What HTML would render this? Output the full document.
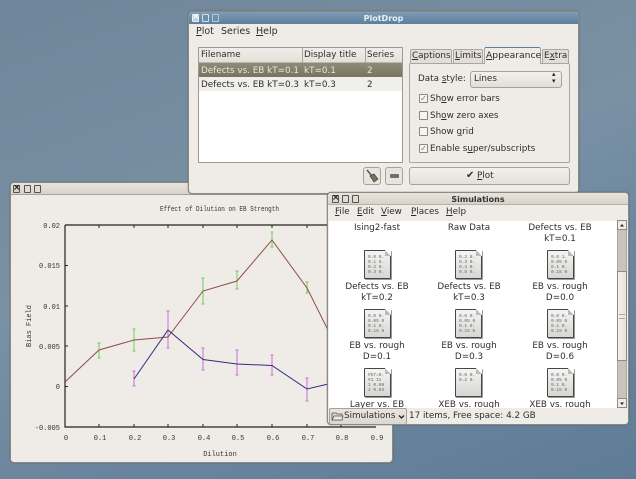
<!DOCTYPE html>
<html><head><meta charset="utf-8">
<style>
html,body{margin:0;padding:0;}
body{width:636px;height:479px;overflow:hidden;position:relative;background:linear-gradient(160deg,#6f8599 0%,#7a91a4 45%,#6b859e 70%,#5f7c96 100%);font-family:"DejaVu Sans","Liberation Sans",sans-serif;font-size:8.800px;color:#2e2e2e;}
.a,.a *{position:absolute;box-sizing:border-box;}
.a u,.a br{position:static;}
.t{white-space:nowrap;line-height:11px;}
.w{background:#efebe6;border:1px solid #8d8a84;border-radius:4px;box-shadow:0 0 1px #444;overflow:hidden;}
.btn{width:7px;height:8px;border:1px solid #55534f;border-radius:1px;background:#e0dbd3;}
.c{text-align:center;width:90px;line-height:11px;}
.ic{width:27px;height:29px;background:linear-gradient(#f4f4f2,#d6d6d2);border:1px solid #444449;border-radius:1px;box-shadow:1px 1px 0 #999;font:4.500px/5px "Liberation Mono",monospace;color:#666;padding:4px 0 0 3px;white-space:pre;}
.ic:after{content:"";position:absolute;right:-1px;top:-1px;width:6px;height:6px;background:linear-gradient(45deg,#bbb 50%,#fff 50%);}
.cb{width:9px;height:9px;border:1px solid #8b8880;background:#f6f4f0;border-radius:1px;color:#777;font-size:8px;line-height:7px;text-align:center;}
u{text-decoration:underline;}
</style></head><body>

<div class="a" style="left:0;top:0;width:636px;height:479px;filter:blur(.3px);">

<!-- Plot window -->
<div class="w" style="left:10px;top:182px;width:383px;height:281px;">
 <div style="left:0;top:0;width:381px;height:12px;background:linear-gradient(#e8e3dc,#d8d3ca);border-bottom:1px solid #a5a29b;"></div>
 <div class="btn" style="left:2px;top:2px;background:#d5d0c8;"></div>
 <div class="t" style="left:2px;top:0;font-size:9px;font-weight:bold;color:#222;width:7px;text-align:center;">×</div>
 <div class="btn" style="left:13px;top:2px;"></div>
 <div class="btn" style="left:23px;top:2px;"></div>
</div>
<svg style="left:0;top:0;" width="636" height="479" viewBox="0 0 636 479">
 <g font-family="Liberation Mono,monospace" font-size="7" fill="#333">
  <text x="160" y="211" textLength="119" lengthAdjust="spacingAndGlyphs">Effect of Dilution on EB Strength</text>
  <text x="60" y="228" text-anchor="end">0.02</text>
  <text x="60" y="268" text-anchor="end">0.015</text>
  <text x="60" y="309" text-anchor="end">0.01</text>
  <text x="60" y="349" text-anchor="end">0.005</text>
  <text x="60" y="389" text-anchor="end">0</text>
  <text x="60" y="430" text-anchor="end">-0.005</text>
  <text x="66" y="440" text-anchor="middle">0</text>
  <text x="100" y="440" text-anchor="middle">0.1</text>
  <text x="135" y="440" text-anchor="middle">0.2</text>
  <text x="169" y="440" text-anchor="middle">0.3</text>
  <text x="204" y="440" text-anchor="middle">0.4</text>
  <text x="238" y="440" text-anchor="middle">0.5</text>
  <text x="273" y="440" text-anchor="middle">0.6</text>
  <text x="308" y="440" text-anchor="middle">0.7</text>
  <text x="342" y="440" text-anchor="middle">0.8</text>
  <text x="377" y="440" text-anchor="middle">0.9</text>
  <text x="220" y="456" text-anchor="middle">Dilution</text>
  <text transform="translate(31,326) rotate(-90)" text-anchor="middle">Bias Field</text>
 </g>
 <path d="M65 225H376M65 225V427H376" fill="none" stroke="#222" stroke-width="1.200"/>
 <path d="M99 225v3M134 225v3M168 225v3M203 225v3M237 225v3M272 225v3M307 225v3M341 225v3M99 427v-3M134 427v-3M168 427v-3M203 427v-3M237 427v-3M272 427v-3M307 427v-3M341 427v-3M65 265.500h3M65 306h3M65 346h3M65 386.500h3" stroke="#222" stroke-width="1"/>
 <!-- error bars -->
 <g stroke="#6fce64" stroke-width="1" fill="none">
  <path d="M99 343v15M134 329v22M203 278v26M237 271v18M272 232v15M307 282v11"/>
  <path d="M97.500 343h3M97.500 358h3M132.500 329h3M132.500 351h3M201.500 278h3M201.500 304h3M235.500 271h3M235.500 289h3M270.500 232h3M270.500 247h3M305.500 282h3M305.500 293h3"/>
 </g>
 <g stroke="#c96fd6" stroke-width="1" fill="none">
  <path d="M134 371v15M168 311v37M203 348v22M237 350v25M272 355v20M307 378v23"/>
  <path d="M132.500 371h3M132.500 386h3M166.500 311h3M166.500 348h3M201.500 348h3M201.500 370h3M235.500 350h3M235.500 375h3M270.500 355h3M270.500 375h3M305.500 378h3M305.500 401h3"/>
 </g>
 <path d="M65 382L99 350L134 340L168 337L203 291L237 281L272 240L307 288L341 356" fill="none" stroke="#8f4f4a" stroke-width="1"/>
 <path d="M134 379L168 330L203 359.500L237 364L272 365.500L307 389L341 381" fill="none" stroke="#2e2e80" stroke-width="1"/>
</svg>

<!-- PlotDrop window -->
<div class="w" style="left:188px;top:11px;width:391px;height:183px;">
 <div style="left:0;top:0;width:389px;height:12px;background:linear-gradient(#7d9bb5,#5d7f9e);"></div>
 <div class="btn" style="left:3px;top:2px;background:#bcd0e0;border-color:#e8eef3;"></div>
 <div class="t" style="left:3px;top:0;font-size:9px;font-weight:bold;color:#fff;width:7px;text-align:center;">×</div>
 <div class="btn" style="left:13px;top:2px;background:#6f8ea9;border-color:#d5e0ea;"></div>
 <div class="btn" style="left:23px;top:2px;background:#6f8ea9;border-color:#b5c8d8;"></div>
 <div class="t" style="left:0;top:1px;width:389px;text-align:center;font-size:8px;font-weight:bold;color:#e8eef4;">PlotDrop</div>
 <div style="left:0;top:12px;width:389px;height:16px;background:#efebe6;"></div>
 <div class="t" style="left:7px;top:14px;font-size:9.500px;"><u>P</u>lot</div>
 <div class="t" style="left:32px;top:14px;font-size:9.500px;">Series</div>
 <div class="t" style="left:67px;top:14px;font-size:9.500px;"><u>H</u>elp</div>

 <div style="left:9px;top:35px;width:205px;height:116px;background:#fff;border:1px solid #9d9a93;">
  <div style="left:0;top:0;width:203px;height:15px;background:linear-gradient(#f0ece7,#e4e0d9);border-bottom:1px solid #bbb7af;"></div>
  <div style="left:103px;top:0;width:1px;height:15px;background:#a8a49c;"></div>
  <div style="left:166px;top:0;width:1px;height:15px;background:#a8a49c;"></div>
  <div class="t" style="left:2px;top:2px;">Filename</div>
  <div class="t" style="left:105px;top:2px;">Display title</div>
  <div class="t" style="left:168px;top:2px;">Series</div>
  <div style="left:0;top:15px;width:203px;height:14px;background:linear-gradient(#8f8b78,#78745f);"></div>
  <div style="left:0;top:29px;width:203px;height:14px;background:#f1efec;"></div>
  <div class="t" style="left:2px;top:18px;color:#e9e6da;">Defects vs. EB kT=0.1</div>
  <div class="t" style="left:105px;top:18px;color:#e9e6da;">kT=0.1</div>
  <div class="t" style="left:168px;top:18px;color:#e9e6da;">2</div>
  <div class="t" style="left:2px;top:32px;">Defects vs. EB kT=0.3</div>
  <div class="t" style="left:105px;top:32px;">kT=0.3</div>
  <div class="t" style="left:168px;top:32px;">2</div>
 </div>

 <!-- small buttons -->
 <div style="left:174px;top:155px;width:18px;height:18px;border:1px solid #a5a29b;border-radius:3px;background:#e9e5de;"></div>
 <div style="left:196px;top:155px;width:18px;height:18px;border:1px solid #a5a29b;border-radius:3px;background:#e9e5de;"></div>
 <svg style="left:176px;top:157px;" width="14" height="14" viewBox="0 0 14 14"><path d="M2 1L7 7" stroke="#555" stroke-width="1.500"/><path d="M5 7L9 5L13 10L9 13Z" fill="#77735f" stroke="#444" stroke-width=".7"/></svg>
 <div style="left:201px;top:162px;width:9px;height:4px;background:#6f6d68;border-radius:1px;"></div>

 <!-- tabs pane -->
 <div style="left:220px;top:51px;width:161px;height:100px;border:1px solid #a9a69f;border-radius:2px;background:#efebe6;"></div>
 <div style="left:221px;top:37px;width:42px;height:15px;background:#e2ded7;border:1px solid #a9a69f;border-radius:2px 2px 0 0;"></div>
 <div style="left:264px;top:37px;width:30px;height:15px;background:#e2ded7;border:1px solid #a9a69f;border-radius:2px 2px 0 0;"></div>
 <div style="left:295px;top:35px;width:57px;height:17px;background:#efebe6;border:1px solid #a9a69f;border-top:1px solid #5d7f9e;border-bottom:0;border-radius:2px 2px 0 0;"></div>
 <div style="left:353px;top:37px;width:27px;height:15px;background:#e2ded7;border:1px solid #a9a69f;border-radius:2px 2px 0 0;"></div>
 <div class="t" style="left:223px;top:39px;"><u>C</u>aptions</div>
 <div class="t" style="left:266px;top:39px;"><u>L</u>imits</div>
 <div class="t" style="left:297px;top:38px;font-size:9.200px;"><u>A</u>ppearance</div>
 <div class="t" style="left:355px;top:39px;">E<u>x</u>tra</div>

 <div class="t" style="left:229px;top:62px;">Data <u>s</u>tyle:</div>
 <div style="left:281px;top:59px;width:92px;height:17px;border:1px solid #a5a29b;border-radius:3px;background:linear-gradient(#f3f0eb,#e2ded6);"></div>
 <div class="t" style="left:285px;top:62px;">Lines</div>
 <div class="t" style="left:363px;top:59px;font-size:7px;line-height:7px;color:#222;">▴</div>
 <div class="t" style="left:363px;top:66px;font-size:7px;line-height:7px;color:#222;">▾</div>

 <div class="cb" style="left:230px;top:82px;">✓</div>
 <div class="t" style="left:241px;top:82px;">Sh<u>o</u>w error bars</div>
 <div class="cb" style="left:230px;top:99px;"></div>
 <div class="t" style="left:241px;top:99px;">Sh<u>o</u>w zero axes</div>
 <div class="cb" style="left:230px;top:115px;"></div>
 <div class="t" style="left:241px;top:115px;">Show <u>g</u>rid</div>
 <div class="cb" style="left:230px;top:132px;">✓</div>
 <div class="t" style="left:241px;top:132px;">Enable s<u>u</u>per/subscripts</div>

 <div style="left:220px;top:155px;width:161px;height:18px;border:1px solid #a5a29b;border-radius:3px;background:linear-gradient(#f3f0eb,#e4e0d9);"></div>
 <div class="t" style="left:277px;top:158px;font-size:10px;color:#333;">✔</div>
 <div class="t" style="left:288px;top:159px;"><u>P</u>lot</div>
</div>

<!-- Simulations window -->
<div class="w" style="left:327px;top:192px;width:302px;height:233px;">
 <div style="left:0;top:0;width:300px;height:12px;background:linear-gradient(#e8e3dc,#d8d3ca);border-bottom:1px solid #b5b2aa;"></div>
 <div class="btn" style="left:4px;top:2px;"></div>
 <div class="t" style="left:4px;top:0;font-size:9px;font-weight:bold;color:#222;width:7px;text-align:center;">×</div>
 <div class="btn" style="left:14px;top:2px;"></div>
 <div class="btn" style="left:24px;top:2px;"></div>
 <div class="t" style="left:0;top:1px;width:300px;text-align:center;font-size:8px;font-weight:bold;color:#333;">Simulations</div>
 <div class="t" style="left:7px;top:14px;"><u>F</u>ile</div>
 <div class="t" style="left:29px;top:14px;"><u>E</u>dit</div>
 <div class="t" style="left:53px;top:14px;"><u>V</u>iew</div>
 <div class="t" style="left:83px;top:14px;"><u>P</u>laces</div>
 <div class="t" style="left:118px;top:14px;"><u>H</u>elp</div>

 <div style="left:1px;top:28px;width:288px;height:187px;background:#fff;overflow:hidden;">
  <div class="t c" style="left:3px;top:2px;">Ising2-fast</div>
  <div class="t c" style="left:95px;top:2px;">Raw Data</div>
  <div class="t c" style="left:186px;top:2px;">Defects vs. EB<br>kT=0.1</div>

  <div class="ic" style="left:35px;top:29px;">0.0 0.
0.1 0.
0.2 0.
0.3 0.</div>
  <div class="ic" style="left:126px;top:29px;">0.2 0.
0.3 0.
0.4 0.
0.5 0.</div>
  <div class="ic" style="left:218px;top:29px;">0.0 1.
0.05 0
0.1 0.
0.15 0</div>
  <div class="t c" style="left:3px;top:61px;">Defects vs. EB<br>kT=0.2</div>
  <div class="t c" style="left:95px;top:61px;">Defects vs. EB<br>kT=0.3</div>
  <div class="t c" style="left:186px;top:61px;">EB vs. rough<br>D=0.0</div>

  <div class="ic" style="left:35px;top:88px;">0.0 0.
0.05 0
0.1 0.
0.15 0</div>
  <div class="ic" style="left:126px;top:88px;">0.0 0.
0.05 0
0.1 0.
0.15 0</div>
  <div class="ic" style="left:218px;top:88px;">0.0 0.
0.05 0
0.1 0.
0.15 0</div>
  <div class="t c" style="left:3px;top:120px;">EB vs. rough<br>D=0.1</div>
  <div class="t c" style="left:95px;top:120px;">EB vs. rough<br>D=0.3</div>
  <div class="t c" style="left:186px;top:120px;">EB vs. rough<br>D=0.6</div>

  <div class="ic" style="left:35px;top:147px;">#kT=0.
#1 Is
1 0.08
2 0.03</div>
  <div class="ic" style="left:126px;top:147px;">0.0 0.
0.2 0.</div>
  <div class="ic" style="left:218px;top:147px;">0.0 0.
0.05 0
0.1 0.
0.15 0</div>
  <div class="t c" style="left:3px;top:179px;">Layer vs. EB</div>
  <div class="t c" style="left:95px;top:179px;">XEB vs. rough</div>
  <div class="t c" style="left:186px;top:179px;">XEB vs. rough</div>
 </div>

 <!-- scrollbar -->
 <div style="left:289px;top:27px;width:10px;height:188px;background:#c8c4bc;border:1px solid #a9a69f;"></div>
 <div style="left:289px;top:27px;width:10px;height:10px;background:#efebe6;border:1px solid #8d8a84;"></div>
 <div style="left:289px;top:78px;width:10px;height:90px;background:linear-gradient(90deg,#f3f0eb,#e6e2db);border:1px solid #8d8a84;"></div>
 <div style="left:291px;top:121px;width:6px;height:5px;border-top:1px solid #aaa69e;border-bottom:1px solid #aaa69e;"></div>
 <div style="left:289px;top:205px;width:10px;height:10px;background:#efebe6;border:1px solid #8d8a84;"></div>
 <svg style="left:291px;top:29px;" width="6" height="7"><path d="M1 4.500L3 2L5 4.500Z" fill="#222"/></svg>
 <svg style="left:291px;top:207px;" width="6" height="7"><path d="M1 2.500L3 5L5 2.500Z" fill="#222"/></svg>

 <!-- status bar -->
 <div style="left:1px;top:215px;width:78px;height:17px;background:linear-gradient(#e9e5de,#dcd8d0);border:1px solid #a5a29b;border-radius:2px;"></div>
 <svg style="left:3px;top:217px;" width="13" height="12" viewBox="0 0 13 12"><path d="M1 3h4l1 1h5v6H1z" fill="#d8d4c8" stroke="#555" stroke-width=".8"/><path d="M1 10l2-4h9l-1 4z" fill="#ece8dc" stroke="#555" stroke-width=".8"/></svg>
 <div class="t" style="left:16px;top:218px;">Simulations</div>
 <svg style="left:70px;top:221px;" width="7" height="6"><path d="M1 1.500L3.500 4L6 1.500" fill="none" stroke="#222" stroke-width="1.300"/></svg>
 <div class="t" style="left:81px;top:218px;">17 items, Free space: 4.2 GB</div>
</div>

</div>
</body></html>
